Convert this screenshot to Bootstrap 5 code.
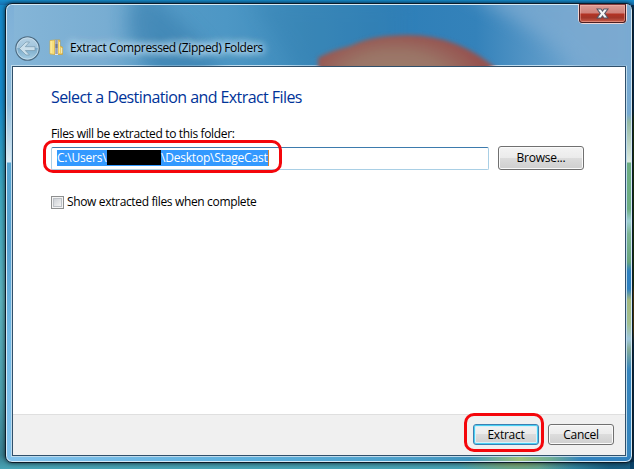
<!DOCTYPE html>
<html lang="en">
<head>
<meta charset="utf-8">
<title>Extract Compressed (Zipped) Folders</title>
<link href="https://cdn.jsdelivr.net/npm/bootstrap@5.3.0/dist/css/bootstrap.min.css" rel="stylesheet">
<style>
html,body{width:634px;height:469px;overflow:hidden}
body{font:12px/16px "Open Sans","Noto Sans",sans-serif;color:#000;padding:3px 1px 6px 5px;
 background:
 linear-gradient(90deg,transparent 85%,rgba(10,70,110,.75) 96%) 0 100%/100% 7px no-repeat,
 radial-gradient(ellipse 60px 14px at 517px 463px,#7da46b,transparent) ,
 linear-gradient(#168dcc,#176fb0) 0 0/100% 5px no-repeat,
 linear-gradient(#06355f 0 110px,#223f10 118px 285px,#5d4510 292px 330px,#083459 345px) 100% 0/4px 100% no-repeat,
 linear-gradient(#1689c9 0,#1689c9 100px,#3da5bd 190px,#5cb1bd 300px,#4a9dab 400px,#397f91 455px,#48a4b5 469px)}
.glass{border:1px solid #0b1d2b;border-radius:7px;box-shadow:inset 0 0 0 1px #d5e9f5,0 0 4px rgba(0,0,0,.75);padding:1px 6px 5px 6px;
 background:
 linear-gradient(90deg,#84c3ed,#5db0dd 38%,#4b9fc9 65%,#3f93bd 74%,#9dc17c 82%,#70ad93 87%,#3182bf 92%) 0 100%/100% 6px no-repeat,
 linear-gradient(#7eb0d7 0,#8dbbdb 100px,#dcebf4 158px,#57a5d1 159px,#579fcf 240px,#72b9e5 330px,#84c3ed 100%) 0 0/8px 100% no-repeat,
 linear-gradient(#76a9d1 0 110px,#94b9a4 118px,#dbe9df 158px,#6cad82 159px 205px,#9fd0d4 217px,#7cb493 230px,#67a47d 258px,#2d80c0 267px 285px,#a4b87d 296px,#a1bf91 320px,#9fc7dc 335px,#86ac98 345px,#3585be 366px) 100% 0/8px 100% no-repeat,
 linear-gradient(90deg,#86b6d8 0,#78add2 100px,#559ac6 155px,#4d97c5 220px,#3e8bbb 300px,#2f7fb8 400px,#3482ba 470px,#6fa5cf 570px,#7baad1 620px)}
.captionbar{height:61px}
.scenery{left:1px;top:1px}
.closebtn{right:5px;top:0;width:49px;height:20px;border:1px solid #f0d5d5;border-top:0;border-radius:0 0 5px 5px}
.closebtn div{height:19px;border:1px solid #4d1f22;border-top-color:#843b3c;border-radius:0 0 3px 3px;background:linear-gradient(#dd9c94,#cf817a 48%,#b43324 52%,#a23629 75%,#c9604d);box-shadow:inset 0 0 0 1px rgba(255,200,190,.4)}
.backbtn{left:8px;top:31px}
.zipicon{left:43px;top:35px}
.caption{left:64px;top:36px;white-space:nowrap;letter-spacing:-.36px;text-shadow:0 0 6px #d9edf9,0 0 8px #cce5f5,0 0 10px #b8d9ee,0 0 12px #b8d9ee}
.client{border:1px solid #30506b;box-shadow:0 0 0 1px #bedbed;background:#fff}
.pagebody{height:347px;padding:20px 38px 0}
h1{font-size:16px;line-height:20px;font-weight:400;color:#039;letter-spacing:-.58px;margin:0 0 19px;white-space:nowrap}
.pathfield{width:438px;height:23px;border:1px solid #a9cfe5;border-top-color:#3d7bad;border-radius:2px;padding:2px 5px}
.picked{height:16px;line-height:14px;background:#39f;color:#fff;white-space:nowrap;letter-spacing:-.2px;border-right:1px solid #d58232;width:212px}
.redact{width:54px;height:15px;background:#000}
.winbtn{height:24px;font-size:12px;line-height:14px;padding:0;color:#000;letter-spacing:-.25px;border:1px solid #707070;border-radius:3px;box-shadow:inset 0 0 0 1px #fafafa;background:linear-gradient(#f3f3f3,#ebebeb 49%,#dcdcdc 50%,#cfcfcf)}
.winbtn.deflt{border-color:#3c7fb1;box-shadow:inset 0 0 0 1px #48d0f3,inset 0 0 0 2px #d8f0f8}
.tick{width:13px;height:13px;border:1px solid #8e8f8f;padding:1px;background:#f4f4f4}
.tick div{height:9px;border:1px solid #bdc1c6;background:linear-gradient(135deg,#cdd0d5,#f3f3f3)}
.footbar{height:41px;background:#f0f0f0;border-top:1px solid #dfdfdf;padding:9px 11px 0 0}
.ring{border:3px solid #f4060b;border-radius:10px;pointer-events:none}
.fieldname,.showtext{letter-spacing:-.35px}
.pathstart{width:50px}
.browse{width:86px;margin-left:9px}
.ring-path{left:-8px;top:-6px;width:239px;height:33px}
.showrow{margin-top:24px}
.showtext{margin-left:3px}
.extractbox{margin-right:9px}
.extractbox .btn,.cancel{width:66px;height:21px}
.ring-ok{left:-9px;top:-11px;width:80px;height:39px}
</style>
</head>
<body class="m-0">
<main class="glass position-relative h-100">
 <svg class="scenery position-absolute" width="624" height="61" viewBox="7 5 624 61">
  <defs><filter id="soft" x="-20%" y="-20%" width="140%" height="140%"><feGaussianBlur stdDeviation="2"/></filter>
  <filter id="wide" x="-30%" y="-50%" width="160%" height="200%"><feGaussianBlur stdDeviation="9"/></filter>
  <radialGradient id="petal" gradientUnits="userSpaceOnUse" cx="0" cy="0" r="1" gradientTransform="translate(395 78) scale(90 46)"><stop offset="0" stop-color="#9d7f6c"/><stop offset=".55" stop-color="#9a7466"/><stop offset="1" stop-color="#96524f"/></radialGradient></defs>
  <path d="M460-10H640V80H590Q550 35 460-10Z" fill="#7baad1" opacity=".8" filter="url(#wide)"/>
  <path d="M140-10Q110 30 160 80H225Q200 30 140-10Z" fill="#397fae" opacity=".6" filter="url(#wide)"/>
  <path d="M250 0L300 75H400V0Z" fill="#2f7cad" opacity=".3" filter="url(#wide)"/>
  <path d="M318 78V58Q330 51 350 46Q372 35 408 35Q458 35 498 70V78Z" fill="url(#petal)" filter="url(#soft)"/>
 </svg>
 <header class="captionbar">
  <svg class="backbtn position-absolute" width="27" height="27" viewBox="0 0 27 27">
   <defs><linearGradient id="orb" x2="0" y2="1"><stop stop-color="#b7d2e4"/><stop offset=".48" stop-color="#a0c4dc"/><stop offset=".5" stop-color="#7aaac9"/><stop offset="1" stop-color="#a9d0e6"/></linearGradient></defs>
   <circle cx="13.5" cy="13.5" r="11.7" fill="url(#orb)" stroke="#4c6b82" stroke-width="1.2"/>
   <circle cx="13.5" cy="13.5" r="10.7" fill="none" stroke="#cfe3ef" stroke-opacity=".7"/>
   <path d="M5.5 13.5L12 7h3.5l-4.2 4.7H21v3.8h-9.7l4.2 4.5H12Z" fill="#cadfeb" stroke="#7899ae" stroke-width=".7"/>
  </svg>
  <svg class="zipicon position-absolute" width="15" height="17" viewBox="0 0 15 17">
   <path d="M1 1.5L6 1v14.5L1 15Z" fill="#f7df7c" stroke="#d5ae43" stroke-width=".7"/>
   <path d="M6 1h5v6l2.5 1v7.5H6Z" fill="#edcb61" stroke="#c9a23e" stroke-width=".7"/>
   <path d="M2 2v12" stroke="#fff3b0"/><path d="M10.5 3v11" stroke="#ffeb9a"/><path d="M12.7 9v5" stroke="#f7f1c8"/>
   <path d="M7.5 1v15" stroke="#e4e5eb" stroke-width="3"/><path d="M7.5 1.5V15" stroke="#4b587d" stroke-width="2.5" stroke-dasharray="1 1"/><path d="M6.5 5h2v4h-2z" fill="#72798c"/>
  </svg>
  <span class="caption position-absolute">Extract Compressed (Zipped) Folders</span>
  <div class="closebtn position-absolute"><div class="d-flex justify-content-center align-items-center">
   <svg width="13" height="11" viewBox="0 0 13 11"><path d="M1 1h4l1.5 2L8 1h4L8.7 5.5 12 10H8L6.5 8 5 10H1l3.3-4.5Z" fill="#f5f5f5" stroke="#535666" stroke-width="1.1"/></svg>
  </div></div>
 </header>
 <section class="client">
  <div class="pagebody">
   <h1>Select a Destination and Extract Files</h1>
   <div class="text-nowrap fieldname">Files will be extracted to this folder:</div>
   <div class="position-relative d-flex align-items-center mt-1">
    <div class="pathfield"><div class="picked d-flex align-items-center"><span class="pathstart">C:\Users\</span><span class="redact"></span><span class="pathend">\Desktop\StageCast</span></div></div>
    <button class="btn winbtn browse">Browse...</button>
    <div class="ring ring-path position-absolute"></div>
   </div>
   <label class="showrow d-flex align-items-center"><span class="tick"><div></div></span><span class="showtext text-nowrap">Show extracted files when complete</span></label>
  </div>
  <footer class="footbar d-flex justify-content-end">
   <div class="position-relative extractbox"><button class="btn winbtn deflt">Extract</button><div class="ring ring-ok position-absolute"></div></div>
   <button class="btn winbtn cancel">Cancel</button>
  </footer>
 </section>
</main>
<script src="https://cdn.jsdelivr.net/npm/bootstrap@5.3.0/dist/js/bootstrap.bundle.min.js"></script>
</body>
</html>
